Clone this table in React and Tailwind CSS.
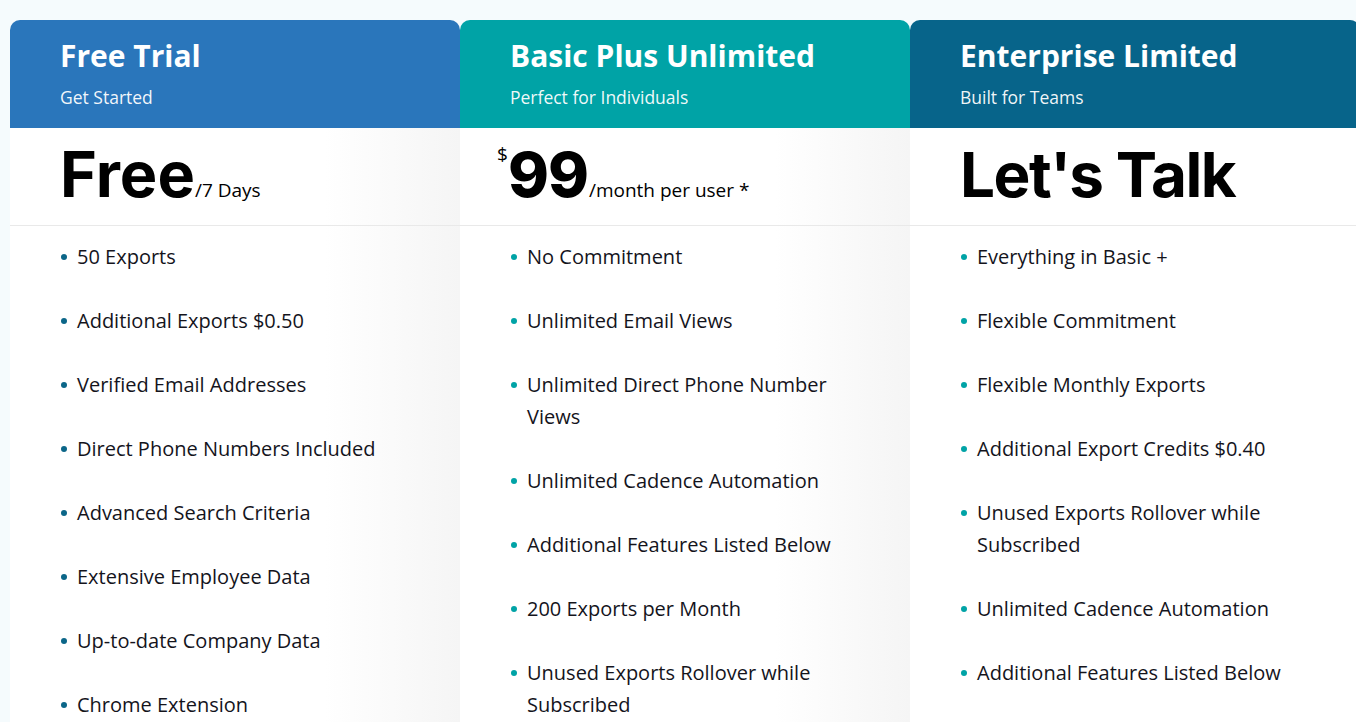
import React from 'react';

const plans = [
  {
    title: 'Free Trial',
    subtitle: 'Get Started',
    header: 'bg-[#2a76bb]',
    body: 'bg-[linear-gradient(90deg,#ffffff_0%,#ffffff_70%,#f5f5f5_100%)]',
    bullet: 'bg-[#0b6688]',
    price: 'free',
    features: [
      '50 Exports',
      'Additional Exports $0.50',
      'Verified Email Addresses',
      'Direct Phone Numbers Included',
      'Advanced Search Criteria',
      'Extensive Employee Data',
      'Up-to-date Company Data',
      'Chrome Extension',
    ],
  },
  {
    title: 'Basic Plus Unlimited',
    subtitle: 'Perfect for Individuals',
    header: 'bg-[#00a3a6]',
    body: 'bg-[linear-gradient(90deg,#ffffff_0%,#ffffff_70%,#f5f5f5_100%)]',
    bullet: 'bg-[#00a3a6]',
    price: 'basic',
    features: [
      'No Commitment',
      'Unlimited Email Views',
      'Unlimited Direct Phone Number Views',
      'Unlimited Cadence Automation',
      'Additional Features Listed Below',
      '200 Exports per Month',
      'Unused Exports Rollover while Subscribed',
    ],
  },
  {
    title: 'Enterprise Limited',
    subtitle: 'Built for Teams',
    header: 'bg-[#07648a]',
    body: 'bg-white',
    bullet: 'bg-[#00a3a6]',
    price: 'enterprise',
    features: [
      'Everything in Basic +',
      'Flexible Commitment',
      'Flexible Monthly Exports',
      'Additional Export Credits $0.40',
      'Unused Exports Rollover while Subscribed',
      'Unlimited Cadence Automation',
      'Additional Features Listed Below',
    ],
  },
];

const Price = ({ kind }) => {
  if (kind === 'free') {
    return (
      <div className="flex items-baseline">
        <span className="font-['Inter',sans-serif] text-[63px] font-bold leading-none">Free</span>
        <span className="text-[19px]">/7 Days</span>
      </div>
    );
  }
  if (kind === 'basic') {
    return (
      <div className="flex items-baseline -ml-[13px]">
        <span className="self-start -mt-[4px] text-[19px]">$</span>
        <span className="font-['Inter',sans-serif] text-[62px] font-extrabold leading-none tracking-[-1px]">99</span>
        <span className="ml-[1px] text-[19px]">/month per user *</span>
      </div>
    );
  }
  return (
    <div className="font-['Inter',sans-serif] text-[62px] font-bold leading-none tracking-[-1.5px]">Let's Talk</div>
  );
};

const PlanCard = ({ plan }) => (
  <div className="flex w-[450px] shrink-0 flex-col">
    <div className={`${plan.header} h-[108px] rounded-t-[10px] pl-[50px] pt-[17px] text-white`}>
      <h2 className="text-[30px] font-bold leading-[38px]">{plan.title}</h2>
      <p className="mt-[10px] text-[17.5px] leading-[24px] text-white/95">{plan.subtitle}</p>
    </div>
    <div className={`${plan.body} flex-1`}>
      <div className="flex h-[98px] items-center border-b border-[#e9e9e9] pb-[4px] pl-[50px] text-black">
        <Price kind={plan.price} />
      </div>
      <ul className="flex flex-col gap-[32px] pl-[50px] pr-[60px] pt-[15px]">
        {plan.features.map((f) => (
          <li key={f} className="flex items-start text-[20px] leading-[32px] text-[#14141c]">
            <span className={`${plan.bullet} mt-[13px] ml-[1px] mr-[10px] h-[6px] w-[6px] shrink-0 rounded-full`} />
            <span>{f}</span>
          </li>
        ))}
      </ul>
    </div>
  </div>
);

export default function App() {
  return (
    <div className="h-[722px] w-[1356px] overflow-hidden bg-[#f5fbfd] pl-[10px] pt-[20px] font-['Open_Sans',sans-serif]">
      <div className="flex h-full">
        {plans.map((p) => (
          <PlanCard key={p.title} plan={p} />
        ))}
      </div>
    </div>
  );
}
